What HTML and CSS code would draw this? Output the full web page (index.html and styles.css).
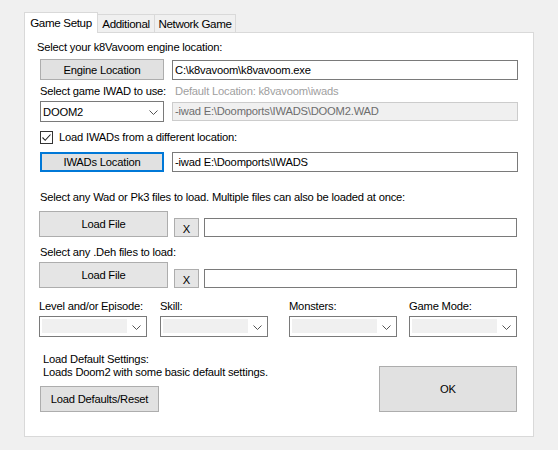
FILE: index.html
```html
<!DOCTYPE html>
<html>
<head>
<meta charset="utf-8">
<link rel="stylesheet" href="styles.css">
</head>
<body>
<div class="window">
  <div class="tabs">
    <div class="tab active">Game Setup</div>
    <div class="tab t2">Additional</div>
    <div class="tab t3">Network Game</div>
  </div>
  <div class="panel">
    <div class="label l-engine">Select your k8Vavoom engine location:</div>
    <div class="row r-engine">
      <div class="btn b-engine">Engine Location</div>
      <div class="text t-wide">C:\k8vavoom\k8vavoom.exe</div>
    </div>
    <div class="label l-iwad"><span class="l-iwad-main">Select game IWAD to use:</span><span class="hint">Default Location: k8vavoom\iwads</span></div>
    <div class="row r-iwad">
      <div class="combo c-doom"><span class="combo-val">DOOM2</span><svg class="chev" width="9" height="5" viewBox="0 0 9 5"><path d="M0.5 0.5 L4.5 4.5 L8.5 0.5" fill="none" stroke="#555" stroke-width="1"/></svg></div>
      <div class="text t-wide disabled">-iwad E:\Doomports\IWADS\DOOM2.WAD</div>
    </div>
    <div class="check">
      <span class="box"><svg width="11" height="11" viewBox="0 0 11 11"><path d="M1.5 5.5 L4.2 8.3 L9.5 2.5" fill="none" stroke="#222" stroke-width="1.1"/></svg></span>
      <span>Load IWADs from a different location:</span>
    </div>
    <div class="row r-loc">
      <div class="btn b-focus">IWADs Location</div>
      <div class="text t-wide">-iwad E:\Doomports\IWADS</div>
    </div>
    <div class="label l-wad">Select any Wad or Pk3 files to load. Multiple files can also be loaded at once:</div>
    <div class="row r-file r-file1">
      <div class="btn b-file">Load File</div>
      <div class="btn b-x">X</div>
      <div class="text t-file"></div>
    </div>
    <div class="label l-deh">Select any .Deh files to load:</div>
    <div class="row r-file r-file2">
      <div class="btn b-file">Load File</div>
      <div class="btn b-x">X</div>
      <div class="text t-file"></div>
    </div>
    <div class="opts">
      <div class="opt o1">
        <div class="opt-label">Level and/or Episode:</div>
        <div class="combo c-small"><span class="fill"></span><svg class="chev" width="9" height="5" viewBox="0 0 9 5"><path d="M0.5 0.5 L4.5 4.5 L8.5 0.5" fill="none" stroke="#555" stroke-width="1"/></svg></div>
      </div>
      <div class="opt o2">
        <div class="opt-label">Skill:</div>
        <div class="combo c-small"><span class="fill"></span><svg class="chev" width="9" height="5" viewBox="0 0 9 5"><path d="M0.5 0.5 L4.5 4.5 L8.5 0.5" fill="none" stroke="#555" stroke-width="1"/></svg></div>
      </div>
      <div class="opt o3">
        <div class="opt-label">Monsters:</div>
        <div class="combo c-small"><span class="fill"></span><svg class="chev" width="9" height="5" viewBox="0 0 9 5"><path d="M0.5 0.5 L4.5 4.5 L8.5 0.5" fill="none" stroke="#555" stroke-width="1"/></svg></div>
      </div>
      <div class="opt o4">
        <div class="opt-label">Game Mode:</div>
        <div class="combo c-small"><span class="fill"></span><svg class="chev" width="9" height="5" viewBox="0 0 9 5"><path d="M0.5 0.5 L4.5 4.5 L8.5 0.5" fill="none" stroke="#555" stroke-width="1"/></svg></div>
      </div>
    </div>
    <div class="bottom">
      <div class="defaults">
        <div class="def-text">Load Default Settings:<br>Loads Doom2 with some basic default settings.</div>
        <div class="btn b-reset">Load Defaults/Reset</div>
      </div>
      <div class="btn b-ok">OK</div>
    </div>
  </div>
</div>
</body>
</html>
```
FILE: styles.css
```css
* { box-sizing: border-box; }
html, body { margin: 0; padding: 0; }
body {
  background: #f0f0f0;
  font-family: "Liberation Sans", Arial, sans-serif;
  font-size: 11.2px;
  letter-spacing: -0.2px;
  color: #000;
  width: 558px;
  height: 450px;
  overflow: hidden;
}
.window { padding: 12px 0 0 24px; }
.tabs { display: flex; height: 20px; align-items: flex-end; }
.tab {
  height: 18px;
  border: 1px solid #d9d9d9;
  border-bottom: none;
  border-left: none;
  background: #f0f0f0;
  padding: 2px 0 0 0;
  text-align: center;
  letter-spacing: -0.35px;
  font-size: 11.6px;
}
.tab.active {
  height: 21px;
  width: 74px;
  background: #fff;
  border-left: 1px solid #d9d9d9;
  position: relative;
  z-index: 1;
  margin-bottom: -1px;
  padding-top: 3px;
}
.t2 { width: 57px; }
.t3 { width: 81px; }
.panel {
  width: 510px;
  height: 405px;
  background: #fff;
  border: 1px solid #d9d9d9;
  padding: 0 0 0 15px;
}
.label { height: 13px; line-height: 13px; white-space: nowrap; }
.l-engine { margin-top: 8px; margin-left: -3px; }
.row { display: flex; align-items: flex-end; }
.btn {
  background: #e1e1e1;
  border: 1px solid #adadad;
  display: flex;
  align-items: center;
  justify-content: center;
  white-space: nowrap;
}
.text {
  border: 1px solid #7a7a7a;
  background: #fff;
  height: 20px;
  line-height: 18px;
  padding-left: 2px;
  white-space: nowrap;
  overflow: hidden;
}
.t-wide { width: 346px; margin-left: 8px; }
.r-engine { margin-top: 5px; }
.b-engine { width: 124px; height: 21px; }
.l-iwad { margin-top: 5px; display: flex; }
.l-iwad-main { width: 135px; }
.hint { color: #a0a0a0; }
.r-iwad { margin-top: 3px; }
.combo {
  border: 1px solid #7a7a7a;
  background: #fff;
  position: relative;
  display: flex;
  align-items: center;
}
.c-doom { width: 124px; height: 21px; padding-left: 2px; }
.chev { position: absolute; right: 6px; top: 8px; }
.c-doom .chev { right: 5px; top: 8px; }
.disabled {
  background: #f0f0f0;
  border-color: #cccccc;
  color: #6d6d6d;
  height: 19px;
  line-height: 17px;
  margin-bottom: 1px;
}
.check {
  display: flex;
  align-items: center;
  margin-top: 8px;
  height: 14px;
}
.box {
  width: 13px;
  height: 13px;
  border: 1px solid #333;
  background: #fff;
  display: flex;
  align-items: center;
  justify-content: center;
  margin-right: 6px;
}
.box svg { display: block; }
.r-loc { margin-top: 8px; }
.b-focus { width: 124px; height: 20px; border: 2px solid #0078d7; }
.l-wad { margin-top: 19px; }
.r-file1 { margin-top: 7px; }
.r-file2 { margin-top: 3px; }
.b-file { width: 129px; height: 26px; margin-left: -1px; background: #e5e5e5; }
.b-x { width: 25px; height: 19px; margin-left: 6px; background: #e5e5e5; padding-top: 2px; }
.t-file { width: 313px; height: 19px; margin-left: 5px; }
.l-deh { margin-top: 9px; }
.opts { display: flex; margin-top: 12px; }
.opt-label { height: 13px; line-height: 13px; margin-bottom: 3px; white-space: nowrap; }
.o1 { margin-left: -1px; }
.o2 { margin-left: 13px; }
.o3 { margin-left: 21px; }
.o4 { margin-left: 12px; }
.c-small { width: 108px; height: 21px; }
.fill { position: absolute; left: 2px; top: 2px; width: 85px; height: 14px; background: #f0f0f0; }
.c-small .chev { right: 5px; top: 8px; }
.bottom { display: flex; margin-top: 16px; }
.defaults { width: 339px; }
.def-text { margin-left: 3px; line-height: 13px; white-space: nowrap; }
.b-reset { width: 119px; height: 26px; margin-top: 7px; }
.b-ok { width: 138px; height: 46px; margin-top: 13px; }
```
